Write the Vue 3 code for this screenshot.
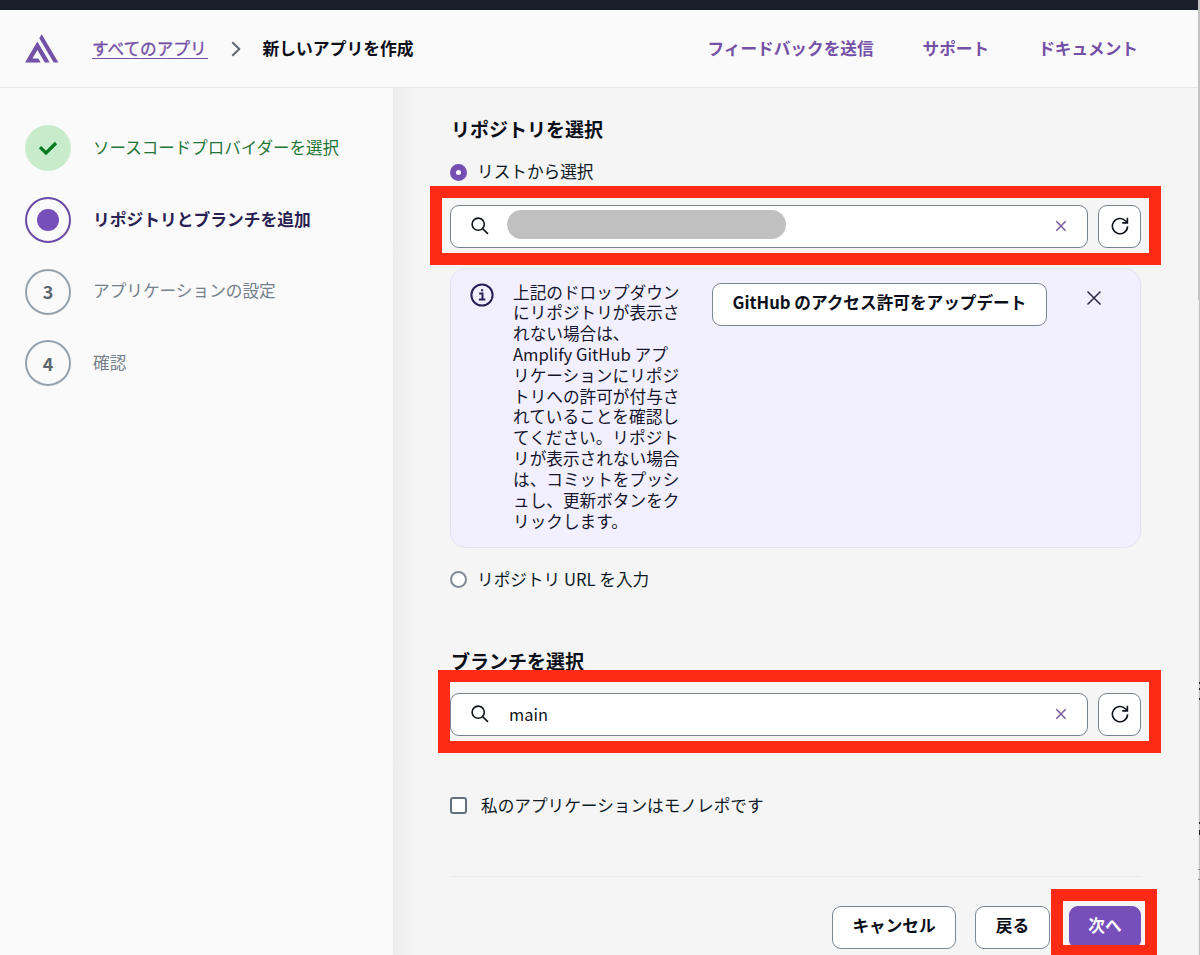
<script setup>
const steps = [
  { label: 'ソースコードプロバイダーを選択', state: 'done' },
  { label: 'リポジトリとブランチを追加', state: 'active' },
  { label: 'アプリケーションの設定', state: 'todo', number: 3 },
  { label: '確認', state: 'todo', number: 4 },
]
const navLinks = ['フィードバックを送信', 'サポート', 'ドキュメント']
const infoText = [
  '上記のドロップダウン', 'にリポジトリが表示さ', 'れない場合は、', 'Amplify GitHub アプ',
  'リケーションにリポジ', 'トリへの許可が付与さ', 'れていることを確認し', 'てください。リポジト',
  'リが表示されない場合', 'は、コミットをプッシ', 'ュし、更新ボタンをク', 'リックします。',
].join('\n')
const marks = ['repo', 'branch', 'next']
</script>

<template>
  <div class="page">
    <div class="topbar"></div>
    <header class="header">
      <svg class="logo" width="34" height="29" viewBox="0 0 34 29">
        <path d="M12.4 7.6 0 28.6h15.6l-2.2-4.1H7.4l5-8.6 7.4 12.7h4.9z" />
        <path d="M14.3 4.2 16.7.2 33.4 28.6H28.7z" />
      </svg>
      <a class="crumb">すべてのアプリ</a>
      <svg class="chevron" width="10" height="16" viewBox="0 0 10 16"><path d="M1.3 1.2 8.3 8l-7 6.8" /></svg>
      <span class="current">新しいアプリを作成</span>
      <nav class="nav"><a v-for="n in navLinks" :key="n">{{ n }}</a></nav>
    </header>

    <div class="body">
      <aside class="sidebar">
        <div v-for="s in steps" :key="s.label" class="step" :class="s.state">
          <div class="dot">
            <svg v-if="s.state === 'done'" width="20" height="16" viewBox="0 0 20 16"><path d="M2 7.2 8 13 18 3" /></svg>
            <i v-else-if="s.state === 'active'"></i>
            <span v-else>{{ s.number }}</span>
          </div>
          <span class="label">{{ s.label }}</span>
        </div>
      </aside>

      <main class="main">
        <h2>リポジトリを選択</h2>
        <label class="choice"><i class="radio on"></i><span>リストから選択</span></label>
        <div class="field">
          <div class="input">
            <svg class="search" width="18" height="18" viewBox="0 0 18 18"><circle cx="7.2" cy="7.2" r="6.1" /><path d="m11.6 11.6 5.4 5.2" /></svg>
            <span class="redacted"></span>
            <svg class="clear" width="12" height="12" viewBox="0 0 12 12"><path d="m1.3 1.3 9.4 9.4m0-9.4-9.4 9.4" /></svg>
          </div>
          <button class="refresh"><svg width="18" height="18" viewBox="0 0 18 18"><path d="M16.6 9.4A7.6 7.6 0 1 1 14.6 4L16.3 5.8M16.4.8v5.1h-5.2" /></svg></button>
        </div>

        <section class="info">
          <svg class="info-icon" width="24" height="24" viewBox="0 0 24 24">
            <circle cx="12" cy="12" r="10.6" />
            <path d="M9.2 10.6h3.3v6M8.9 16.6h6.4M11 7.2h2.2" />
          </svg>
          <p>{{ infoText }}</p>
          <button class="btn update">GitHub のアクセス許可をアップデート</button>
          <svg class="close" width="16" height="16" viewBox="0 0 16 16"><path d="m1.5 1.5 13 13m0-13-13 13" /></svg>
        </section>

        <label class="choice url"><i class="radio"></i><span>リポジトリ URL を入力</span></label>
        <h2 class="second">ブランチを選択</h2>
        <div class="field branch">
          <div class="input">
            <svg class="search" width="18" height="18" viewBox="0 0 18 18"><circle cx="7.2" cy="7.2" r="6.1" /><path d="m11.6 11.6 5.4 5.2" /></svg>
            <span class="value">main</span>
            <svg class="clear" width="12" height="12" viewBox="0 0 12 12"><path d="m1.3 1.3 9.4 9.4m0-9.4-9.4 9.4" /></svg>
          </div>
          <button class="refresh"><svg width="18" height="18" viewBox="0 0 18 18"><path d="M16.6 9.4A7.6 7.6 0 1 1 14.6 4L16.3 5.8M16.4.8v5.1h-5.2" /></svg></button>
        </div>
        <label class="choice mono"><i class="checkbox"></i><span>私のアプリケーションはモノレポです</span></label>
        <footer class="actions">
          <button class="btn cancel">キャンセル</button>
          <button class="btn back">戻る</button>
          <button class="btn primary">次へ</button>
        </footer>
      </main>
    </div>
    <svg class="edge" width="2" height="955" viewBox="0 0 2 955">
      <path fill="#c3c3c3" d="M0 0h2v955H0z" />
      <path fill="#ececec" d="M0 300h1v655H0z" />
      <path fill="#222" d="M1 682h1v2H1zM1 688h1v2H1zM1 698h1v2H1zM1 822h1v2H1zM1 830h1v5H1z" />
      <path fill="#888" d="M0 869h2v1H0zM0 879h2v1H0z" />
    </svg>
    <div v-for="m in marks" :key="m" class="mark" :class="m"></div>
  </div>
</template>

<style>
body { margin: 0; overflow: hidden; }
</style>

<style scoped>
* { box-sizing: border-box; }
.page {
  position: relative; width: 1200px; height: 955px; overflow: hidden;
  display: flex; flex-direction: column; background: #f5f5f5; color: #0d1a26;
  font-family: "Noto Sans CJK JP", sans-serif; font-size: 16.65px; line-height: 21px;
  white-space: nowrap;
}
svg { display: block; fill: none; flex: none; }
.topbar { height: 10px; background: #1a1f2b; flex: none; }
.header {
  height: 78px; flex: none; display: flex; align-items: center; padding: 0 62px 0 25px;
  background: #fafafa; border-bottom: 1px solid #e6e6e6;
}
.logo { fill: #7451a6; }
.crumb { margin-left: 33px; width: 116px; color: #7451a6; -webkit-text-stroke: .35px #7451a6; line-height: 20px; border-bottom: 1.5px solid #7451a6; }
.chevron { margin-left: 23px; stroke: #5c6670; stroke-width: 2; }
.current { margin-left: 21.5px; font-size: 16.8px; font-weight: 700; color: #0b0f18; }
.nav { margin-left: auto; display: flex; gap: 49px; color: #7451a6; font-weight: 700; }
.body { flex: 1; display: flex; min-height: 0; }
.sidebar { width: 393px; flex: none; background: #fafafa; padding: 37px 25px; display: flex; flex-direction: column; gap: 25px; }
.step { display: flex; align-items: center; gap: 22px; height: 46.7px; color: #75808b; }
.label { margin-top: -2px; }
.dot {
  width: 46px; height: 46px; border: 2px solid #95a1ad; border-radius: 50%;
  display: flex; align-items: center; justify-content: center; font-weight: 700; color: #5c6670; font-size: 18px;
}
.done { color: #1f7536; }
.done .label { font-size: 16.5px; }
.active .label { font-size: 16.75px; }
.done .dot { background: #c8ebcc; border: 0; }
.done svg { stroke: #067a1c; stroke-width: 3.2; }
.active { color: #2a1f52; font-weight: 700; }
.active .dot { border-color: #6c4aa3; }
.active i { width: 22px; height: 22px; border-radius: 50%; background: #764fbb; }
.main {
  flex: 1; padding: 30px 59px 0 57px; display: flex; flex-direction: column;
  background: linear-gradient(90deg, #ececec, #f5f5f5 24px);
}
h2 { margin: 0; padding-left: 1px; font-size: 19px; line-height: 22px; font-weight: 700; color: #0b0f18; }
.choice { display: flex; align-items: center; gap: 10px; height: 22px; margin-top: 21px; }
.choice span { margin-top: -1px; }
.radio { width: 17px; height: 17px; border: 2px solid #808b98; border-radius: 50%; background: #fff; }
.radio.on { border: 6px solid #764fb5; }
.checkbox { width: 17px; height: 17px; border: 2px solid #64707e; border-radius: 3px; background: #fff; margin-right: 4px; }
.field { display: flex; gap: 10px; margin-top: 22px; height: 43px; flex: none; }
.input, .refresh { background: #fff; border: 1.6px solid #77838d; border-radius: 9px; height: 43px; }
.input { width: 638px; display: flex; align-items: center; padding: 0 20px; }
.input > svg { margin-top: -1px; }
.refresh { width: 43px; padding: 0 0 1px; display: flex; align-items: center; justify-content: center; }
.search, .refresh svg { stroke: #10151c; stroke-width: 1.6; }
.redacted { width: 279px; height: 29px; border-radius: 15px; background: #c0c0c0; margin: -4px 0 0 18px; }
.value { margin: -1px 0 0 20px; color: #10151c; font-size: 16.4px; }
.clear { margin-left: auto; stroke: #7355a0; stroke-width: 1.4; }
.info {
  margin-top: 20px; height: 280px; flex: none; display: flex; align-items: flex-start;
  background: #f2f0ff; border: 1px solid #e4e0f5; border-radius: 16px; padding: 14px 38px 0 19px; color: #15152c;
}
.info-icon { stroke: #2c1f58; stroke-width: 2; }
p { margin: -1.5px 0 0 19px; width: 199px; line-height: 20.83px; white-space: pre; }
.close { margin: 7px 0 0 auto; stroke: #2c2846; stroke-width: 1.5; }
.btn {
  height: 43px; padding: 0; border: 1.6px solid #7c8794; border-radius: 9px; background: #fff; color: #0b0f18;
  font: inherit; font-weight: 700; line-height: 35px; padding-bottom: 4px; text-align: center; flex: none;
}
.update { width: 335px; }
.url { position: static; margin-top: 20.5px; }
.second { margin-top: 59.5px; }
.branch { margin-top: 21px; }
.mono { margin-top: 58.5px; }
.actions { margin-top: 59.5px; border-top: 1px solid #ebebeb; padding-top: 29px; display: flex; justify-content: flex-end; }
.cancel { width: 124px; margin-right: 19px; }
.back { width: 75px; margin-right: 19px; }
.primary { width: 72px; background: #764fbb; border-color: #764fbb; color: #fff; }
.edge { position: absolute; top: 0; right: 0; }
.mark { position: absolute; border: 12px solid #fe2a14; }
.mark.repo { left: 430px; top: 186px; width: 731px; height: 79px; }
.mark.branch { left: 438px; top: 670px; width: 723px; height: 83px; margin: 0; }
.mark.next { left: 1051px; top: 889px; width: 106px; height: 68px; }
</style>
